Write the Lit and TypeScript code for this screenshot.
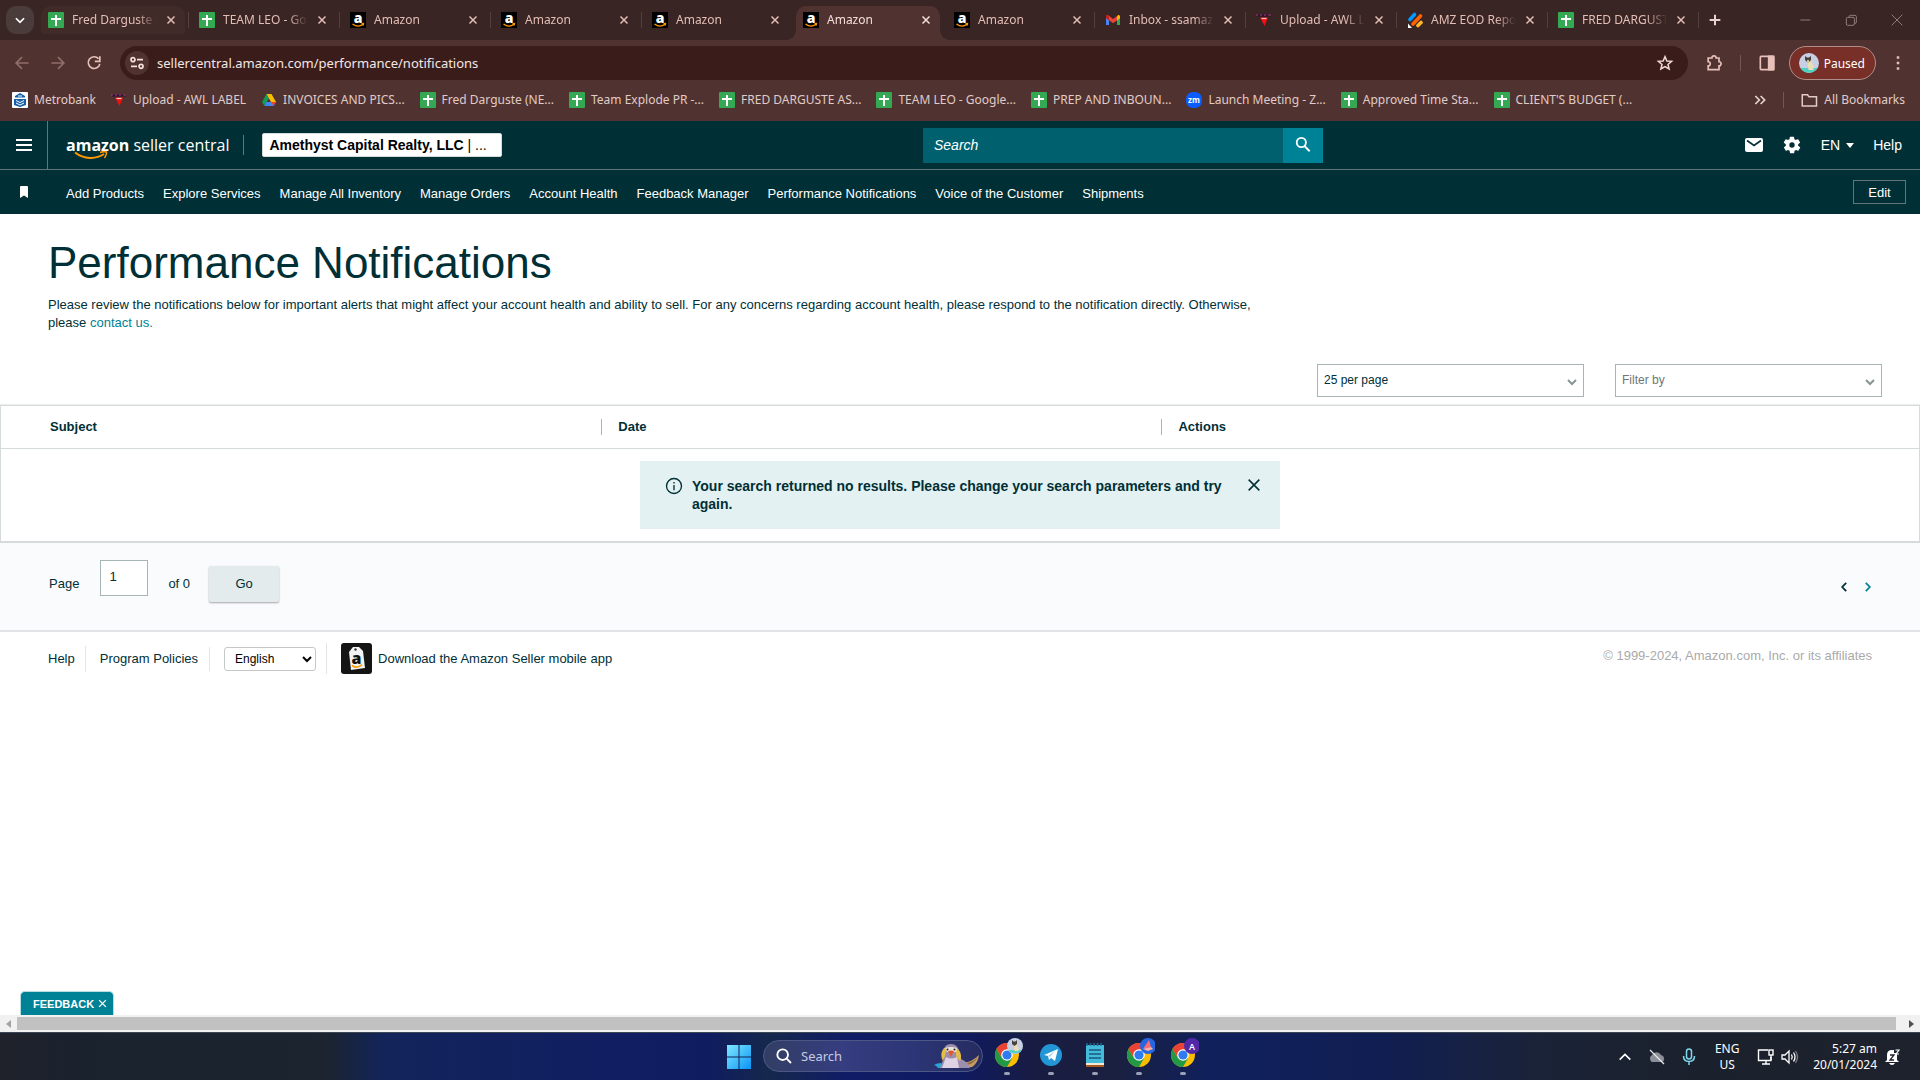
import { LitElement, html, svg, css, nothing } from "lit";
import { customElement, property } from "lit/decorators.js";
import { classMap } from "lit/directives/class-map.js";

/* ---------- icons ---------- */

const sheetIcon = html`<svg class="fav" viewBox="0 0 16 16" aria-hidden="true">
  <rect width="16" height="16" rx="1" fill="#34a853"/><path d="M7 3h2v3h4v2H9v6H7V8H3V6h4z" fill="#fff"/></svg>`;
const amazonIcon = html`<svg class="fav" viewBox="0 0 16 16" aria-hidden="true">
  <rect width="16" height="16" fill="#000"/>
  <text x="8" y="10.5" text-anchor="middle" font-family="Open Sans, sans-serif" font-weight="800" font-size="14" fill="#fff">a</text>
  <path d="M2.5 12c3.500 2.600 7.500 2.600 10.500.300M11.500 11.700l2-.2-.4 2" fill="none" stroke="#f90" stroke-width="1.300"/></svg>`;
const gmailIcon = html`<svg class="fav" viewBox="0 0 16 16" aria-hidden="true">
  <path d="M1 4v9h3V7z" fill="#4285f4"/><path d="M15 4v9h-3V7z" fill="#34a853"/>
  <path d="M12 4.500L13 3q2-.5 2 1.500V6l-3 2.500z" fill="#fbbc04"/><path d="M1 4.500Q1 2.500 3 3l5 4 4-3v4.500L8 11.300 1 6z" fill="#ea4335"/>
  <path d="M1 4.500V6l3 2.500V4L3 3Q1 2.500 1 4.500z" fill="#c5221f"/></svg>`;
const awlIcon = html`<svg class="fav" viewBox="0 0 16 16" aria-hidden="true">
  <path d="M1 3.500h14" stroke="#2b1238" stroke-width="2"/><path d="M0 3h2M4 3h2M8 3h2M12 3h3" stroke="#b03a6a" stroke-width="1.200"/>
  <path d="M4 5.500h8L8.500 14z" fill="#f01010"/><path d="M5.500 6.500h5" stroke="#f6c9c9" stroke-width="1.200"/></svg>`;
const eodIcon = html`<svg class="fav" viewBox="0 0 16 16" aria-hidden="true" fill="none" stroke-linecap="round" stroke-width="3.600">
  <path d="M3 7.500L7.500 2.500" stroke="#0099ff"/><path d="M6 12l7.500-8" stroke="#ff6100"/><path d="M11 13.500l3-3" stroke="#ffb629"/>
  <path d="M1 11.500V16h4z" fill="#fff"/></svg>`;
const bankIcon = html`<svg class="fav" viewBox="0 0 16 16" aria-hidden="true">
  <rect width="16" height="16" rx="1" fill="#fff"/><path d="M8 1l5 3v1.500H3V4zM2 7h12v6l-6 2-6-2z" fill="#1560a8"/>
  <path d="M4 8.500l4 2 4-2M4 11l4 2 4-2M6 4h4" stroke="#fff" fill="none"/></svg>`;
const driveIcon = html`<svg class="fav" viewBox="0 0 16 16" aria-hidden="true">
  <path d="M5.500 2L1 10l2.500 4L8 6z" fill="#0f9d58"/><path d="M5.500 2h5L15 10h-5z" fill="#fbbc04"/><path d="M3.500 14L5.500 10H15l-2.500 4z" fill="#4285f4"/><path d="M15 10l-2.500 4L10 10z" fill="#ea4335"/></svg>`;
const zoomIcon = html`<svg class="fav" viewBox="0 0 16 16" aria-hidden="true">
  <rect width="16" height="16" rx="7" fill="#0b5cff"/><text x="8" y="10.500" text-anchor="middle" font-family="Open Sans, sans-serif" font-weight="700" font-size="8" fill="#fff">zm</text></svg>`;

const line = (size: number, body: unknown, width = 2) => html`<svg width=${size} height=${size} viewBox="0 0 24 24"
  fill="none" stroke="currentColor" stroke-width=${width} aria-hidden="true">${body}</svg>`;

const avatar = (size: number) => html`<svg width=${size} height=${size} viewBox="0 0 20 20" aria-hidden="true">
  <circle cx="10" cy="10" r="10" fill="#c6cfe4"/><path d="M1.500 15a10 10 0 0 0 17 0z" fill="#4fd0c4"/>
  <path d="M8.500 8h3l3 5v4h-5z" fill="#eadfb4"/><path d="M6 3l2 1.500h2L12 3v4L9 10 6 7z" fill="#4a423a"/><path d="M8 7h2v3H8z" fill="#d8c48a"/></svg>`;

const chromeLogo = svg`
  <circle cx="12" cy="12" r="12" fill="#fbbc04"/>
  <path d="M12 6.200H22.400A12 12 0 0 0 1.600 6l5.200 9z" fill="#ea4335"/>
  <path d="M6.800 15L1.600 6A12 12 0 0 0 12 24l5.200-9z" fill="#229a45"/>
  <circle cx="12" cy="12" r="5.800" fill="#fff"/><circle cx="12" cy="12" r="4.600" fill="#2f7cf0"/>`;

const chromeIcon = (badge: unknown) => html`<svg width="32" height="32" viewBox="0 0 32 32" aria-hidden="true">
  <g transform="translate(4 6)">${chromeLogo}</g>${badge}</svg>`;

const tabs: { title: string; icon: unknown; active?: boolean; hover?: boolean }[] = [
  { title: "Fred Darguste (", icon: sheetIcon, hover: true },
  { title: "TEAM LEO - Go", icon: sheetIcon },
  { title: "Amazon", icon: amazonIcon },
  { title: "Amazon", icon: amazonIcon },
  { title: "Amazon", icon: amazonIcon },
  { title: "Amazon", icon: amazonIcon, active: true },
  { title: "Amazon", icon: amazonIcon },
  { title: "Inbox - ssamaz", icon: gmailIcon },
  { title: "Upload - AWL L", icon: awlIcon },
  { title: "AMZ EOD Repo", icon: eodIcon },
  { title: "FRED DARGUST", icon: sheetIcon },
];

const bookmarks: [string, unknown][] = [
  ["Metrobank", bankIcon],
  ["Upload - AWL LABEL", awlIcon],
  ["INVOICES AND PICS...", driveIcon],
  ["Fred Darguste (NE...", sheetIcon],
  ["Team Explode PR -...", sheetIcon],
  ["FRED DARGUSTE AS...", sheetIcon],
  ["TEAM LEO - Google...", sheetIcon],
  ["PREP AND INBOUN...", sheetIcon],
  ["Launch Meeting - Z...", zoomIcon],
  ["Approved Time Sta...", sheetIcon],
  ["CLIENT'S BUDGET (...", sheetIcon],
];

const base = css`
  *, *::before, *::after { box-sizing: border-box; }
  button, input, select { font: inherit; color: inherit; margin: 0; }
  button { background: none; border: 0; padding: 0; display: inline-flex; align-items: center; justify-content: center; }
  a { color: inherit; text-decoration: none; }
  svg { display: block; flex: none; }
`;

/* ---------- browser chrome ---------- */

@customElement("browser-tab")
class BrowserTab extends LitElement {
  @property() label = "";
  @property({ attribute: false }) icon: unknown = nothing;
  @property({ type: Boolean }) active = false;
  @property({ type: Boolean }) hover = false;

  static styles = [base, css`
    :host { display: block; box-sizing: border-box; width: 151px; flex: 0 1 auto; min-width: 0; padding: 6px 4px 0 3px; }
    .tab { position: relative; display: flex; align-items: center; height: 34px; padding: 0 8px 6px 7px; gap: 8px; color: #e3bdb6; border-radius: 10px; }
    .tab.hover { background: linear-gradient(#402b28, #402b28) 0 0 / 100% 28px no-repeat; }
    .tab.active { background: #503330; color: #f5dedb; border-radius: 10px 10px 0 0; }
    .tab.active::before, .tab.active::after { content: ""; position: absolute; bottom: 0; width: 10px; height: 10px; }
    .tab.active::before { left: -10px; background: radial-gradient(circle at 0 0, transparent 10px, #503330 10px); }
    .tab.active::after { right: -10px; background: radial-gradient(circle at 100% 0, transparent 10px, #503330 10px); }
    .fav { width: 16px; height: 16px; }
    .title { flex: 1; overflow: hidden; white-space: nowrap; font-size: 12px; line-height: 16px;
      mask-image: linear-gradient(90deg, #000 calc(100% - 20px), transparent); }
  `];

  render() {
    return html`<div class=${classMap({ tab: true, active: this.active, hover: this.hover })}>
      ${this.icon}<span class="title">${this.label}</span>
      <button aria-label="Close tab">${line(12, svg`<path d="M5 5l14 14M19 5L5 19"/>`, 3)}</button>
    </div>`;
  }
}

@customElement("browser-chrome")
class BrowserChrome extends LitElement {
  static styles = [base, css`
    :host { display: block; background: #503330; color: #e8d3d0; font-family: "Noto Sans", "Open Sans", sans-serif; font-size: 12px; }
    .strip { display: flex; align-items: center; height: 40px; background: #392523; padding-left: 6px; color: #e3bdb6; }
    .search-tabs { width: 28px; height: 28px; border-radius: 10px; background: #4a3c3b; margin-right: 4px; color: #fff; }
    .tabs { display: flex; flex: 0 1 auto; min-width: 0; align-self: stretch; }
    .tabs browser-tab { background: linear-gradient(#53403e, #53403e) 100% 12px / 1px 16px no-repeat; }
    .tabs browser-tab.plain { background: none; }
    .new-tab { width: 28px; height: 28px; margin: 0 auto 0 2px; color: #e8d3d0; }
    .window { display: flex; color: #8f7d7b; }
    .window button { width: 46px; height: 32px; }
    .bar { display: flex; align-items: center; height: 46px; padding: 0 4px; color: #e8c0ba; }
    .nav { width: 36px; height: 34px; }
    .nav.off { color: #8f6d69; }
    .omni { display: flex; flex: 1; align-items: center; height: 34px; margin: 0 8px; padding: 0 14px 0 5px; border-radius: 17px; background: #3a1d1a; color: #f0d8d4; }
    .info { width: 24px; height: 24px; border-radius: 12px; background: #503330; color: #f5dedb; }
    .url { flex: 1; min-width: 0; margin: 0 8px; padding: 0; border: 0; background: none; color: #f5e6e4; font-size: 13px; line-height: 20px; outline: none; }
    .sep { width: 1px; height: 16px; background: #775652; }
    .bar .sep { margin: 0 8px; }
    .chip { height: 34px; gap: 5px; margin: 0 4px; padding: 0 10px 0 9px; border: 1px solid #b08f8b; border-radius: 17px; background: #772f27; color: #fff; }
    .marks { display: flex; align-items: center; height: 35px; padding: 0 15px 7px 12px; }
    .marks a { display: flex; align-items: center; gap: 6px; margin-right: 15px; white-space: nowrap; line-height: 16px; color: #e0cbc8; }
    .marks .all { margin: 0 0 0 16px; }
    .more { margin-left: auto; margin-right: 15px; }
    .fav { width: 16px; height: 16px; }
  `];

  render() {
    return html`
      <div class="strip">
        <button class="search-tabs" aria-label="Search tabs">${line(14, svg`<path d="M5 9l7 7 7-7"/>`, 3)}</button>
        <div class="tabs">
          ${tabs.map((t, i) => html`<browser-tab class=${t.active || tabs[i + 1]?.active ? "plain" : ""}
            .label=${t.title} .icon=${t.icon} ?active=${t.active} ?hover=${t.hover}></browser-tab>`)}
        </div>
        <button class="new-tab" aria-label="New tab">${line(16, svg`<path d="M12 4v16M4 12h16"/>`, 3)}</button>
        <div class="window">
          <button aria-label="Minimize">${line(16, svg`<path d="M5 12h15"/>`, 1.5)}</button>
          <button aria-label="Restore">${line(16, svg`<rect x="5" y="8" width="12" height="12" rx="2"/><path d="M9 8V7q0-2 2-2h7q2 0 2 2v8q0 2-2 2"/>`, 1.5)}</button>
          <button aria-label="Close">${line(16, svg`<path d="M4 4l16 16M20 4L4 20"/>`, 1.5)}</button>
        </div>
      </div>
      <div class="bar">
        <button class="nav off" aria-label="Back">${line(20, svg`<path d="M20 12H5M12 5l-7 7 7 7"/>`)}</button>
        <button class="nav off" aria-label="Forward">${line(20, svg`<path d="M4 12h15M12 5l7 7-7 7"/>`)}</button>
        <button class="nav" aria-label="Reload">${line(20, svg`<path d="M17.500 7A7 7 0 1 0 19 13M19 4v6h-6"/>`)}</button>
        <div class="omni">
          <button class="info" aria-label="Site information">${line(16, svg`<circle cx="6" cy="7" r="3"/><path d="M12 7h9M3 17h9"/><circle cx="18" cy="17" r="3"/>`, 2.6)}</button>
          <input class="url" aria-label="Address" value="sellercentral.amazon.com/performance/notifications">
          <button aria-label="Bookmark this tab">${line(18, svg`<path d="M12 3.500l2.500 5.800 6.300.5-4.800 4.100 1.500 6.100L12 16.800 6.500 20 8 13.900 3.200 9.800l6.300-.5z"/>`)}</button>
        </div>
        <button class="nav" aria-label="Extensions">${line(20, svg`<path d="M5 6h4.500a2.500 2.500 0 0 1 5 0H18v4.500a2.500 2.500 0 0 1 0 5V20H5v-4.500a2.500 2.500 0 0 0 0-5z"/>`)}</button>
        <span class="sep"></span>
        <button class="nav" aria-label="Side panel">${line(20, svg`<rect x="4" y="4" width="16" height="16" rx="1"/><path d="M14 4h6v16h-6z" fill="currentColor"/>`)}</button>
        <button class="chip">${avatar(20)}<span>Paused</span></button>
        <button class="nav" aria-label="Browser menu">${line(20, svg`<path d="M12 4v3M12 10.500v3M12 17v3"/>`, 3)}</button>
      </div>
      <nav class="marks" aria-label="Bookmarks">
        ${bookmarks.map(([name, icon]) => html`<a href="#">${icon}${name}</a>`)}
        <button class="more" aria-label="More bookmarks">${line(16, svg`<path d="M5 6l6 6-6 6M13 6l6 6-6 6"/>`, 2.5)}</button>
        <span class="sep"></span>
        <a class="all" href="#">${line(18, svg`<path d="M3 5h7l2 2.500h10V20H3z"/>`)}All Bookmarks</a>
      </nav>`;
  }
}

/* ---------- seller central header ---------- */

@customElement("seller-header")
class SellerHeader extends LitElement {
  static styles = [base, css`
    :host { display: block; background: #002f36; color: #fff; }
    .top { display: grid; grid-template-columns: minmax(0, 923fr) 400px minmax(0, 597fr); align-items: center; height: 49px; border-bottom: 1px solid #62757a; }
    .left { display: flex; align-items: center; align-self: stretch; }
    .burger { width: 48px; align-self: stretch; border-right: 1px solid #62757a; }
    .logo { display: grid; margin: 0 14px 0 18px; font-family: "Open Sans", sans-serif; font-size: 16px; line-height: 20px; white-space: nowrap; }
    .logo > * { grid-area: 1 / 1; }
    .logo svg { align-self: end; margin: 0 0 -5px 8px; }
    .rule { width: 1px; height: 20px; background: #62757a; }
    .account { width: 240px; height: 24px; margin-left: 18px; padding: 0 6px; border: 1px solid #d5dbdb; border-radius: 2px; background: #fff; color: #000; font-size: 14px; justify-content: flex-start; }
    .search { display: flex; height: 35px; }
    .search input { flex: 1; min-width: 0; border: 0; border-radius: 0; padding: 0 11px; background: #00606e; color: #fff; font-size: 14px; outline: none; }
    .search input::placeholder { color: #fff; font-style: italic; opacity: 1; }
    .search button { width: 40px; background: #008296; }
    .right { display: flex; align-items: center; justify-content: flex-end; gap: 19px; padding-right: 18px; font-size: 14px; }
    .right button { gap: 6px; }
    .quick { display: flex; align-items: center; height: 44px; padding: 0 14px 0 16px; font-size: 13px; }
    .quick a { margin-right: 19px; padding-top: 2px; white-space: nowrap; }
    .quick .mark { margin-right: 34px; }
    .edit { width: 53px; height: 24px; margin-left: auto; border: 1px solid #62757a; }
  `];

  render() {
    return html`
      <div class="top">
        <div class="left">
          <button class="burger" aria-label="Menu"><svg width="16" height="12" viewBox="0 0 16 12" fill="none" stroke="#fff" stroke-width="2"><path d="M0 1h16M0 6h16M0 11h16"/></svg></button>
          <a class="logo" href="#"><span><b>amazon</b> seller central</span>
            <svg width="34" height="9" viewBox="0 0 34 9" fill="none" stroke="#f90" stroke-width="2"><path d="M1 1.500c9 7 21 7 29 1.500"/><path d="M26 1.500c3-1 5-1 6.500-.5.300 2-.5 4-2 6" stroke-width="1.500"/></svg></a>
          <span class="rule"></span>
          <button class="account"><span><b>Amethyst Capital Realty, LLC</b> | ...</span></button>
        </div>
        <form class="search" @submit=${(e: Event) => e.preventDefault()}>
          <input type="text" placeholder="Search" aria-label="Search">
          <button aria-label="Search">${line(20, svg`<circle cx="10" cy="9" r="5.500"/><path d="M14 13.500l6 6"/>`, 2.2)}</button>
        </form>
        <div class="right">
          <button aria-label="Messages"><svg width="18" height="14" viewBox="0 0 18 14"><rect width="18" height="14" rx="2" fill="#fff"/><path d="M2 2.500l7 5 7-5" fill="none" stroke="#002f36" stroke-width="1.600"/></svg></button>
          <button aria-label="Settings"><svg width="20" height="20" viewBox="0 0 24 24" fill="#fff"><path d="M19.400 13a7.500 7.500 0 0 0 0-2l2.100-1.600a.5.5 0 0 0 .1-.6l-2-3.500a.5.5 0 0 0-.6-.2l-2.500 1a7.300 7.300 0 0 0-1.700-1l-.4-2.600a.5.5 0 0 0-.5-.5h-4a.5.5 0 0 0-.5.500l-.4 2.600a7.700 7.700 0 0 0-1.700 1l-2.500-1a.5.5 0 0 0-.6.200l-2 3.500a.5.5 0 0 0 .1.600L4.600 11a8 8 0 0 0 0 2l-2.100 1.600a.5.5 0 0 0-.1.600l2 3.500c.1.200.4.300.6.200l2.500-1c.5.400 1.100.7 1.700 1l.4 2.600c0 .3.200.5.500.5h4c.3 0 .5-.2.500-.5l.4-2.600a7.300 7.300 0 0 0 1.700-1l2.500 1c.2.100.5 0 .6-.2l2-3.500a.5.5 0 0 0-.1-.6zM12 15.200a3.200 3.200 0 1 1 0-6.400 3.200 3.200 0 0 1 0 6.400z"/></svg></button>
          <button>EN <svg width="8" height="5" viewBox="0 0 8 5"><path d="M0 0h8L4 5z" fill="#fff"/></svg></button>
          <a href="#">Help</a>
        </div>
      </div>
      <nav class="quick" aria-label="Favorites">
        <button class="mark" aria-label="Bookmarked pages"><svg width="16" height="12" viewBox="0 0 16 12"><path d="M4 1q0-1 1-1h6q1 0 1 1v11L8 9.500 4 12z" fill="#fff"/></svg></button>
        ${["Add Products", "Explore Services", "Manage All Inventory", "Manage Orders", "Account Health", "Feedback Manager",
          "Performance Notifications", "Voice of the Customer", "Shipments"].map((t) => html`<a href="#">${t}</a>`)}
        <button class="edit">Edit</button>
      </nav>`;
  }
}

/* ---------- page ---------- */

const chevron = html`<svg width="10" height="7" viewBox="0 0 10 7" fill="none" stroke="#879596" stroke-width="2" aria-hidden="true"><path d="M1 1l4 4 4-4"/></svg>`;

@customElement("notifications-page")
class NotificationsPage extends LitElement {
  static styles = [base, css`
    :host { display: flex; flex-direction: column; background: #fff; color: #002f36; font-size: 13px; line-height: 18px; }
    .intro { padding: 23px 48px 0; }
    h1 { margin: 0 0 7px; font-size: 44px; font-weight: 400; line-height: 52px; }
    p { margin: 0; max-width: 1240px; }
    p a { color: #008296; }
    .filters { display: flex; justify-content: flex-end; gap: 31px; padding: 32px 38px 8px; font-size: 12px; }
    .drop { display: grid; flex: 0 1 267px; align-items: center; }
    .drop > * { grid-area: 1 / 1; }
    .drop select { width: 100%; height: 33px; padding: 0 24px 2px 6px; appearance: none; border: 1px solid #a6b6b7; border-radius: 0; background: #fff; }
    .drop.empty select { color: #6c7778; }
    .drop svg { justify-self: end; margin: 4px 7px 0 0; pointer-events: none; }
    .results { border: 1px solid #d5dbdb; border-bottom-width: 2px; box-shadow: 0 -1px 1px #eee; }
    table { width: 100%; border-collapse: collapse; table-layout: fixed; }
    th { height: 42px; padding: 0; text-align: left; border-bottom: 1px solid #d5dbdb; }
    th:first-child { padding-left: 49px; width: 31.3%; }
    th:nth-child(2) { width: 29.2%; }
    th + th span { display: block; border-left: 1px solid #a6b6b7; padding-left: 16px; line-height: 16px; }
    td { padding: 12px 0; }
    .alert { display: flex; align-items: flex-start; max-width: 640px; margin: 0 auto; padding: 16px 18px 16px 25px; background: #e3f1f2; font-size: 14px; font-weight: 700; }
    .alert span { flex: 1; padding: 0 16px 0 9px; }
    .pager { display: flex; align-items: center; height: 89px; padding: 0 46px 5px 49px; background: #fafbfc; border-bottom: 2px solid #e1e4e7; }
    .pager input { display: block; width: 48px; height: 36px; margin: 0 20px 12px 21px; padding: 0 8px 2px; border: 1px solid #a6b6b7; border-radius: 0; }
    .go { width: 70px; height: 36px; margin-left: 19px; border-radius: 2px; background: #e3ebec; box-shadow: 0 1px 2px rgba(0, 0, 0, .35); }
    .step { width: 12px; height: 20px; margin: 6px 0 0 12px; }
    .step.prev { margin-left: auto; }
    .step.next { color: #008296; }
    footer { display: flex; align-items: center; padding: 0 48px; height: 54px; }
    .links { display: flex; align-items: center; }
    .links > a + a, .links > .lang, .lang + a { border-left: 1px solid #e3e6e6; }
    .links > a:first-child { padding-right: 10px; }
    .links > a:nth-child(2) { padding: 4px 11px 4px 14px; }
    .lang { padding: 0 10px 0 14px; }
    .lang select { display: block; width: 92px; height: 24px; padding: 0 4px 0 6px; border: 1px solid #c4c8c8; border-radius: 3px; background: #fff; color: #000; font-size: 12px; }
    .app { display: flex; align-items: center; gap: 6px; padding-left: 14px; }
    .copy { margin: 0 0 6px auto; color: #aaa; }
    .feedback { align-self: flex-start; height: 24px; gap: 4px; margin: auto 0 0 20px; padding: 0 6px 0 12px; border: 1px solid #b9dce0; border-bottom: 0; border-radius: 5px 5px 0 0; background: #008296; color: #fff; font-size: 11px; font-weight: 700; }
  `];

  render() {
    return html`
      <div class="intro">
        <h1>Performance Notifications</h1>
        <p>Please review the notifications below for important alerts that might affect your account health and ability to sell. For any concerns regarding account health, please respond to the notification directly. Otherwise, please <a href="#">contact us.</a></p>
      </div>
      <div class="filters">
        <div class="drop"><select aria-label="Results per page"><option>25 per page</option></select>${chevron}</div>
        <div class="drop empty"><select aria-label="Filter by"><option>Filter by</option></select>${chevron}</div>
      </div>
      <div class="results">
        <table>
          <thead><tr><th scope="col"><span>Subject</span></th><th scope="col"><span>Date</span></th><th scope="col"><span>Actions</span></th></tr></thead>
          <tbody><tr><td colspan="3"><div class="alert" role="status">
            ${line(18, svg`<circle cx="12" cy="12" r="10"/><path d="M12 10.500v7M12 6.500v2"/>`, 1.8)}
            <span>Your search returned no results. Please change your search parameters and try again.</span>
            <button aria-label="Dismiss">${line(16, svg`<path d="M4 4l16 16M20 4L4 20"/>`, 2.4)}</button>
          </div></td></tr></tbody>
        </table>
      </div>
      <div class="pager">
        <label for="page">Page</label><input id="page" type="text" value="1"><span>of 0</span>
        <button class="go">Go</button>
        <button class="step prev" aria-label="Previous page"><svg width="6" height="10" viewBox="0 0 6 10" fill="none" stroke="currentColor" stroke-width="1.800"><path d="M5.200.8L1.200 5l4 4.200"/></svg></button>
        <button class="step next" aria-label="Next page"><svg width="6" height="10" viewBox="0 0 6 10" fill="none" stroke="currentColor" stroke-width="1.800"><path d="M.8.8l4 4.200-4 4.200"/></svg></button>
      </div>
      <footer>
        <div class="links">
          <a href="#">Help</a><a href="#">Program Policies</a>
          <div class="lang"><select aria-label="Language"><option>English</option></select></div>
          <a class="app" href="#"><svg width="31" height="31" viewBox="0 0 31 31" aria-hidden="true"><rect width="31" height="31" rx="3" fill="#141414"/>
            <path d="M8 9l4-5h6l4 4 2 17-14 2z" fill="#f3f3f3"/><circle cx="14.500" cy="6.500" r="1.200" fill="#333"/>
            <text x="15.500" y="20.500" text-anchor="middle" font-family="Open Sans, sans-serif" font-weight="800" font-size="16" fill="#111">a</text>
            <path d="M11 22.500c3 2.200 7 2 10-.8" stroke="#f90" stroke-width="1.600" fill="none"/></svg>Download the Amazon Seller mobile app</a>
        </div>
        <span class="copy">© 1999-2024, Amazon.com, Inc. or its affiliates</span>
      </footer>
      <button class="feedback">FEEDBACK ${line(9, svg`<path d="M3 3l18 18M21 3L3 21"/>`, 3.6)}</button>`;
  }
}

/* ---------- taskbar ---------- */

@customElement("desktop-taskbar")
class DesktopTaskbar extends LitElement {
  static styles = [base, css`
    :host { display: grid; grid-template-columns: 1fr auto 1fr; align-items: center; height: 48px; border-top: 1px solid #3d4654; color: #fff;
      font-family: "Noto Sans", "Open Sans", sans-serif; font-size: 12px; line-height: 16px;
      background: linear-gradient(90deg, #20222b 0, #1a222e 4%, #1b242f 17%, #12245a 20%, #111e62 32%, #101c60 37%, #15284c 40%, #101d66 44%, #0f1a60 50%, #181c42 54%, #1a2040 58%, #10205c 63%, #101e52 72%, #1a2338 80%, #1b212c 88%, #1d222d 100%); }
    .apps { display: flex; align-items: center; grid-column: 2; }
    .start { width: 48px; height: 47px; }
    .find { display: flex; align-items: center; width: 220px; height: 32px; gap: 9px; margin: 0 2px 1px 0; padding: 0 0 0 12px; border: 1px solid #4d5786; border-radius: 16px; background: linear-gradient(90deg, #323e64, #363d80 35%, #2c3575 70%, #262c60); }
    .find input { flex: 1; min-width: 0; width: 40px; padding: 0; border: 0; background: none; font-size: 13px; outline: none; }
    .find input::placeholder { color: #c5cbe0; opacity: 1; }
    .app { flex-direction: column; width: 44px; height: 47px; padding-bottom: 5px; justify-content: flex-end; gap: 3px; }
    .app::after { content: ""; width: 6px; height: 3px; border-radius: 2px; background: #9aa0b5; }
    .tray { display: flex; align-items: center; justify-content: flex-end; padding-right: 20px; }
    .tray button { width: 32px; height: 40px; }
    .lang { width: 44px; margin-right: 3px; text-align: center; }
    .tray .net { width: 52px; gap: 6px; }
    .clock { text-align: right; padding: 0 8px 0 9px; white-space: nowrap; }
    .tray .bell { width: 15px; }
  `];

  render() {
    return html`
      <div class="apps">
        <button class="start" aria-label="Start"><svg width="24" height="24" viewBox="0 0 24 24"><defs><linearGradient id="w" x2="1" y2="1"><stop stop-color="#7fe8ff"/><stop offset="1" stop-color="#0a94f5"/></linearGradient></defs>
          <path d="M0 0h11.500v11.500H0zM12.500 0H24v11.500H12.500zM0 12.500h11.500V24H0zM12.500 12.500H24V24H12.500z" fill="url(#w)"/></svg></button>
        <div class="find">
          ${line(16, svg`<circle cx="10" cy="10" r="8"/><path d="M16 16l6.500 6.500"/>`, 2.8)}
          <input type="text" placeholder="Search" aria-label="Search this computer">
          <svg width="48" height="28" viewBox="0 0 48 28" aria-hidden="true">
            <path d="M0 23q3-2 7-2l1 5H4q-1-2-4-3z" fill="#27a7d8"/><path d="M26 20q10 2 19-7-1 8-7 12l-13 1z" fill="#c79b62"/><path d="M30 21q8 0 14-6-4 7-12 8z" fill="#8f6a45"/>
            <path d="M10 9q0-7 7-7t8 8l2 7q7 3 9 9H6q1-5 4-9z" fill="#9c8fae"/><path d="M12 15q5 3 11 0l2 11H8z" fill="#ddd3e4"/>
            <path d="M10 6q-5 6-1 13l2-5q0-4 3-7zM22 6q6 3 5 11l-1 2q-4-3-4-7z" fill="#e4bd45"/><path d="M11 6q6-2 12 0l-1 4h-9z" fill="#e9e3dc"/>
            <path d="M14 9q3-1 6 0l-3 6z" fill="#e8572c"/><circle cx="13.500" cy="7.500" r="1" fill="#222"/><circle cx="20.500" cy="7.500" r="1" fill="#222"/></svg>
        </div>
        <button class="app" aria-label="Chrome">${chromeIcon(svg`<g transform="translate(16 1)"><circle cx="8" cy="8" r="8" fill="#c6cfe4"/><path d="M1.500 12a8 8 0 0 0 13 0z" fill="#4fd0c4"/><path d="M6.500 6h3l2 4v3h-4z" fill="#eadfb4"/><path d="M5 2l1.500 1.500h2L10 2v4L7.500 8 5 6z" fill="#4a423a"/></g>`)}</button>
        <button class="app" aria-label="Telegram"><svg width="32" height="32" viewBox="0 0 32 32"><circle cx="16" cy="18" r="11" fill="#2396d6"/><path d="M9 18l14-6-3 12-4-3-2 2-1-4z" fill="#fff"/><path d="M13 19l7-5-5 6z" fill="#a9d2ea"/></svg></button>
        <button class="app" aria-label="Notepad"><svg width="32" height="32" viewBox="0 0 32 32"><path d="M7 8h18v18H7z" fill="#45bbdc"/><path d="M8 6v3M11.500 6v3M15 6v3M18.500 6v3M22 6v3" stroke="#1c6f93" stroke-width="1.500"/><path d="M10 13h12M10 17h12M10 21h12" stroke="#165a7d" stroke-width="1.600"/><path d="M7 26h18v2H7z" fill="#f2ead9"/><path d="M7 28h18v2H7z" fill="#a9571d"/></svg></button>
        <button class="app" aria-label="Chrome, second profile">${chromeIcon(svg`<circle cx="25" cy="9" r="8" fill="#2766e3"/><path d="M26 3l2 7-8 2z" fill="#ff6d6d"/><path d="M20 12l8-2 2 2-5 2z" fill="#ffb0a0"/>`)}</button>
        <button class="app" aria-label="Chrome, third profile">${chromeIcon(svg`<circle cx="25" cy="9" r="8" fill="#5129a8"/><text x="25" y="12.500" text-anchor="middle" font-family="Open Sans, sans-serif" font-size="9" font-weight="600" fill="#fff">A</text>`)}</button>
      </div>
      <div class="tray">
        <button aria-label="Show hidden icons">${line(16, svg`<path d="M4 16l8-8 8 8"/>`, 2.4)}</button>
        <button aria-label="Cloud storage"><svg width="18" height="16" viewBox="0 0 18 16"><path d="M4 13a4 4 0 0 1 0-7 5 5 0 0 1 9 0 3.700 3.700 0 0 1 1 7z" fill="#8a8f98"/><path d="M2 1l14 14" stroke="#e8e8ea" stroke-width="1.300"/></svg></button>
        <button aria-label="Microphone"><svg width="14" height="18" viewBox="0 0 14 18" fill="none" stroke="#7fd6ee" stroke-width="1.500"><rect x="4.500" y="1" width="5" height="10" rx="2.500"/><path d="M1.500 8q0 5.500 5.500 5.500T12.500 8M7 14v3"/></svg></button>
        <span class="lang">ENG<br>US</span>
        <button class="net" aria-label="Network and volume">
          <svg width="18" height="18" viewBox="0 0 18 18" fill="none" stroke="#fff" stroke-width="1.400"><path d="M11 2H1.500v10.500H14V9M5 16h8M9 12.500V16"/><rect x="12" y="2" width="4" height="5"/><path d="M14 7v5"/></svg>
          <svg width="18" height="16" viewBox="0 0 18 16" fill="none" stroke="#fff" stroke-width="1.300"><path d="M1 6h3l4-4v12l-4-4H1zM10.500 5.500q1.500 2.500 0 5M12.500 3.500q3 4.500 0 9"/><path d="M14.500 2q4 6 0 12" stroke="#777c88"/></svg></button>
        <span class="clock">5:27 am<br>20/01/2024</span>
        <button class="bell" aria-label="Notifications"><svg width="15" height="16" viewBox="0 0 15 16"><path d="M2 11V6q0-5 5-5h2v3h3v7l2 2H0zM4 14h6q-1 2-3 2t-3-2z" fill="#fff"/><path d="M5 6h4l-4 5h4" fill="none" stroke="#1c212c" stroke-width="1.300"/><path d="M10.500 1H14l-3 4h3" fill="none" stroke="#fff" stroke-width="1.200"/></svg></button>
      </div>`;
  }
}

@customElement("app-root")
class AppRoot extends LitElement {
  static styles = [base, css`
    :host { display: flex; flex-direction: column; min-height: 100vh; font-family: "Liberation Sans", Arial, sans-serif; }
    notifications-page { flex: 1; }
    .scroll { display: flex; align-items: center; height: 17px; background: #f1f1f1; }
    .scroll svg { margin: 0 6px; }
    .thumb { flex: 1; height: 13px; margin-right: 7px; background: #c1c1c1; }
  `];

  render() {
    return html`
      <browser-chrome></browser-chrome>
      <seller-header></seller-header>
      <notifications-page></notifications-page>
      <div class="scroll" aria-hidden="true">
        <svg width="5" height="8" viewBox="0 0 5 8"><path d="M5 0v8L0 4z" fill="#a3a3a3"/></svg>
        <div class="thumb"></div>
        <svg width="5" height="8" viewBox="0 0 5 8"><path d="M0 0v8l5-4z" fill="#505050"/></svg>
      </div>
      <desktop-taskbar></desktop-taskbar>`;
  }
}
